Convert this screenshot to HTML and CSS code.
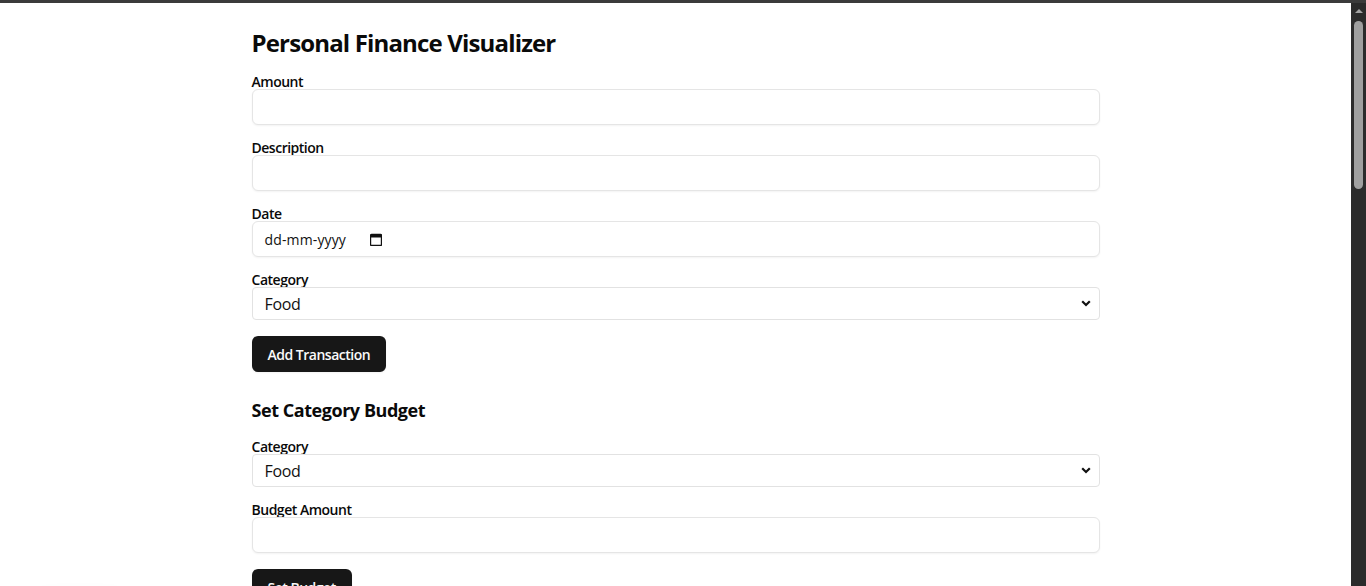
FILE: index.html
```html
<!DOCTYPE html>
<html lang="en">
<head>
<meta charset="utf-8">
<title>Personal Finance Visualizer</title>
<link rel="stylesheet" href="styles.css">
</head>
<body>
<div class="topbar"></div>
<div class="frame">
  <div class="viewport">
    <main class="container">
      <h1 class="title">Personal Finance Visualizer</h1>

      <form class="form">
        <div class="field">
          <label class="label" for="amount">Amount</label>
          <input class="input" id="amount" type="text">
        </div>
        <div class="field">
          <label class="label" for="desc">Description</label>
          <input class="input" id="desc" type="text">
        </div>
        <div class="field">
          <label class="label">Date</label>
          <div class="input date-input">
            <span class="date-text">dd-mm-yyyy</span>
            <svg class="cal-icon" width="12" height="13" viewBox="0 0 12 13"><path d="M1.5 1.5h9a1 1 0 0 1 1 1v9a1 1 0 0 1-1 1h-9a1 1 0 0 1-1-1v-9a1 1 0 0 1 1-1z" fill="none" stroke="#111" stroke-width="1.4"/><rect x="0.8" y="1.5" width="10.4" height="3" fill="#111"/></svg>
          </div>
        </div>
        <div class="field">
          <label class="label" for="cat1">Category</label>
          <div class="select-wrap">
            <select class="select" id="cat1">
              <option>Food</option>
              <option>Transport</option>
              <option>Entertainment</option>
              <option>Utilities</option>
              <option>Other</option>
            </select>
            <svg class="chev" width="10" height="7" viewBox="0 0 10 7"><path d="M1.2 1.2L5 5l3.8-3.8" fill="none" stroke="#111" stroke-width="2.2"/></svg>
          </div>
        </div>
        <div>
          <button type="button" class="btn">Add Transaction</button>
        </div>
      </form>

      <section class="section">
        <h2 class="subtitle">Set Category Budget</h2>
        <div class="form">
          <div class="field">
            <label class="label" for="cat2">Category</label>
            <div class="select-wrap">
              <select class="select" id="cat2">
                <option>Food</option>
                <option>Transport</option>
                <option>Entertainment</option>
                <option>Utilities</option>
                <option>Other</option>
              </select>
              <svg class="chev" width="10" height="7" viewBox="0 0 10 7"><path d="M1.2 1.2L5 5l3.8-3.8" fill="none" stroke="#111" stroke-width="2.2"/></svg>
            </div>
          </div>
          <div class="field">
            <label class="label" for="budget">Budget Amount</label>
            <input class="input" id="budget" type="text">
          </div>
          <div>
            <button type="button" class="btn">Set Budget</button>
          </div>
        </div>
      </section>
    </main>
  </div>
  <div class="scrollbar" aria-hidden="true">
    <div class="sb-arrow"><span class="sb-tri"></span></div>
    <div class="sb-thumb"></div>
  </div>
</div>
<div class="dev-indicator"></div>
</body>
</html>
```

FILE: styles.css
```css
* { box-sizing: border-box; }
html, body {
  margin: 0;
  height: 100%;
  overflow: hidden;
  background: #fff;
}
body {
  font-family: "Open Sans", "Noto Sans", sans-serif;
  color: #0a0a0a;
  display: flex;
  flex-direction: column;
}
.topbar {
  height: 3px;
  flex: none;
  background: #3b3b3b;
}
.frame {
  flex: 1;
  min-height: 0;
  display: flex;
}
.viewport {
  flex: 1;
  min-width: 0;
  overflow: hidden;
}
.scrollbar {
  width: 15px;
  flex: none;
  background: #2b2b2b;
  display: flex;
  flex-direction: column;
}
.sb-arrow {
  height: 15px;
  display: flex;
  justify-content: center;
  padding-top: 6px;
}
.sb-tri {
  width: 0;
  height: 0;
  border-left: 4px solid transparent;
  border-right: 4px solid transparent;
  border-bottom: 4px solid #a3a3a3;
}
.sb-thumb {
  margin: 3px 3px 0;
  height: 168px;
  border-radius: 5px;
  background: #9f9f9f;
}

.container {
  max-width: 896px;
  margin: 0 auto;
  padding: 24px;
}
.title {
  margin: 0 0 16px;
  font-size: 24px;
  line-height: 32px;
  font-weight: 700;
  letter-spacing: -0.035em;
}
.subtitle {
  margin: 0 0 16px;
  font-size: 18px;
  line-height: 28px;
  font-weight: 700;
  letter-spacing: -0.025em;
}
.form {
  display: flex;
  flex-direction: column;
  gap: 16px;
}
.field {
  display: flex;
  flex-direction: column;
}
.label {
  font-size: 14px;
  line-height: 14px;
  font-weight: 600;
  letter-spacing: -0.035em;
}
.input {
  height: 36px;
  width: 100%;
  border: 1px solid #e5e5e5;
  border-radius: 6px;
  box-shadow: 0 1px 2px rgba(0,0,0,0.05);
  padding: 4px 12px;
  font-family: inherit;
  font-size: 14px;
  background: #fff;
  outline: none;
}
.date-input {
  display: flex;
  align-items: center;
}
.date-text {
  font-size: 14px;
  color: #111;
  letter-spacing: 0.01em;
}
.cal-icon {
  margin-left: 24px;
  display: block;
}
.select-wrap {
  position: relative;
}
.select {
  appearance: none;
  -webkit-appearance: none;
  width: 100%;
  height: 33px;
  border: 1px solid #e2e2e2;
  border-radius: 4px;
  background: #fff;
  padding: 0 12px;
  font-family: inherit;
  font-size: 16px;
  letter-spacing: -0.02em;
  color: #111;
  outline: none;
}
.chev {
  position: absolute;
  right: 9px;
  top: 13px;
  pointer-events: none;
}
.btn {
  height: 36px;
  padding: 0 16px;
  border: none;
  border-radius: 6px;
  background: #171717;
  color: #fafafa;
  font-family: inherit;
  font-size: 14px;
  font-weight: 600;
  letter-spacing: -0.035em;
  box-shadow: 0 1px 2px rgba(0,0,0,0.05);
}
.section {
  margin-top: 24px;
}
.dev-indicator {
  position: fixed;
  left: 30px;
  bottom: -44px;
  width: 100px;
  height: 40px;
  border-radius: 20px;
  background: #fff;
  box-shadow: 0 0 14px rgba(0,0,0,0.025);
}
```
